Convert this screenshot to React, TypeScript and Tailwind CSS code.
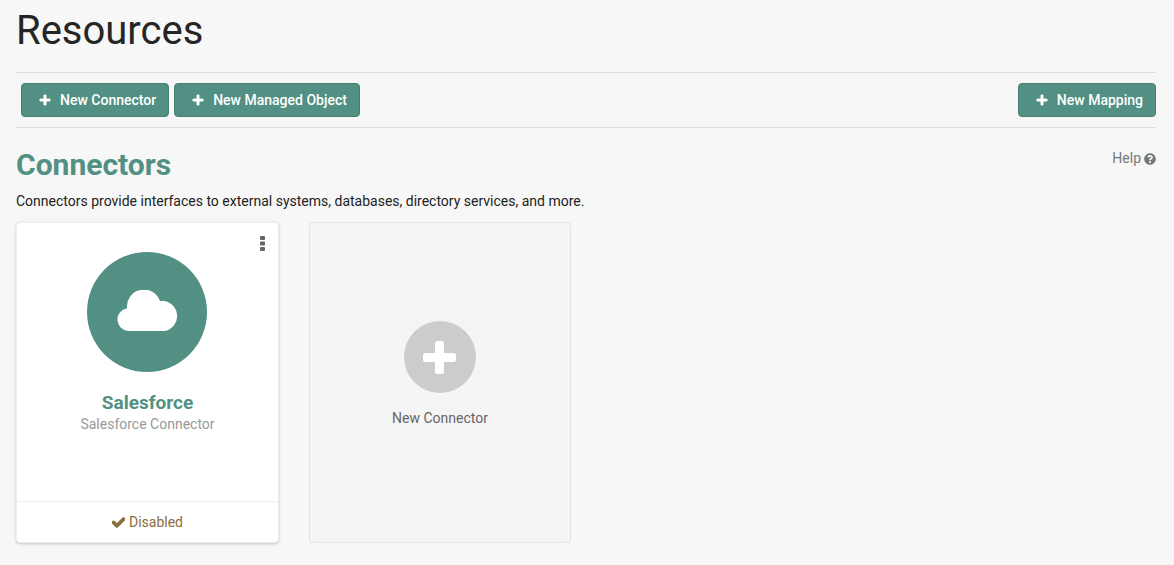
import { FaCheck, FaPlus, FaQuestionCircle } from "react-icons/fa";

function ToolbarButton({ label }: { label: string }) {
  return (
    <button className="h-[34px] flex items-center pl-[17px] pr-[12px] gap-[9px] bg-[#519082] border border-[#46806f] rounded-[4px] text-white text-[14px] font-medium">
      <FaPlus className="w-[12px] h-[12px]" stroke="currentColor" strokeWidth={30} />
      <span>{label}</span>
    </button>
  );
}

export default function App() {
  return (
    <div className="h-[565px] overflow-hidden bg-[#f7f7f7] pl-[16px] pr-[18px] font-['Roboto',sans-serif] text-[#222]">
      <h1 className="h-[72px] pt-[8px] text-[40px] leading-[46px] font-normal text-[#252525]">Resources</h1>

      <div className="h-[56px] flex items-center justify-between pl-[5px] border-y border-[#ddd]">
        <div className="flex gap-[5px]">
          <ToolbarButton label="New Connector" />
          <ToolbarButton label="New Managed Object" />
        </div>
        <ToolbarButton label="New Mapping" />
      </div>

      <div className="flex justify-between items-start">
        <h2 className="mt-[20px] text-[30px] leading-[34px] font-bold text-[#519082]">Connectors</h2>
        <a className="mt-[22px] flex items-center gap-[3px] text-[14px] leading-[17px] text-[#777]">
          Help <FaQuestionCircle className="w-[12px] h-[12px]" />
        </a>
      </div>
      <p className="mt-[9px] text-[14px] leading-[20px] text-[#222]">
        Connectors provide interfaces to external systems, databases, directory services, and more.
      </p>

      <div className="mt-[11px] flex gap-[30px]">
        <div className="relative w-[263px] h-[321px] flex flex-col bg-white border border-[#eee] rounded-[4px] shadow-[0_1px_3px_rgba(0,0,0,0.2)]">
          <svg width="5" height="15" viewBox="0 0 5 15" className="absolute top-[13px] right-[13px] text-[#666]">
            <rect y="0" width="5" height="4" rx="1" fill="currentColor" />
            <rect y="5.500" width="5" height="4" rx="1" fill="currentColor" />
            <rect y="11" width="5" height="4" rx="1" fill="currentColor" />
          </svg>
          <div className="flex-1 flex flex-col items-center pt-[29px]">
            <div className="w-[120px] h-[120px] mr-[2px] rounded-full bg-[#519082] flex items-center justify-center">
              <svg width="62" height="41" viewBox="0 0 62 41" className="mt-[-3px]">
                <path
                  d="M12 41A11.500 11.500 0 0 1 11 18.200A17 17 0 0 1 44 11A15.100 15.100 0 0 1 48 41Z"
                  fill="#fff"
                />
              </svg>
            </div>
            <div className="mt-[19px] text-[19px] leading-[24px] font-bold text-[#519082]">Salesforce</div>
            <div className="text-[14px] leading-[18px] text-[#999]">Salesforce Connector</div>
          </div>
          <div className="h-[41px] flex items-center justify-center gap-[4px] border-t border-[#eee] text-[14px] text-[#8a6d3b]">
            <FaCheck className="w-[13px] h-[13px]" stroke="currentColor" strokeWidth={40} />
            <span>Disabled</span>
          </div>
        </div>

        <div className="w-[262px] h-[321px] flex flex-col items-center bg-[#f5f5f5] border border-[#e3e3e3] rounded-[4px] pt-[98px]">
          <div className="w-[72px] h-[72px] rounded-full bg-[#ccc] flex items-center justify-center">
            <svg width="33" height="33" viewBox="0 0 33 33" className="mr-[1px]">
              <rect x="12" y="0" width="9" height="33" rx="2.500" fill="#fff" />
              <rect x="0" y="12" width="33" height="9" rx="2.500" fill="#fff" />
            </svg>
          </div>
          <div className="mt-[16px] text-[14px] leading-[18px] text-[#666]">New Connector</div>
        </div>
      </div>
    </div>
  );
}
